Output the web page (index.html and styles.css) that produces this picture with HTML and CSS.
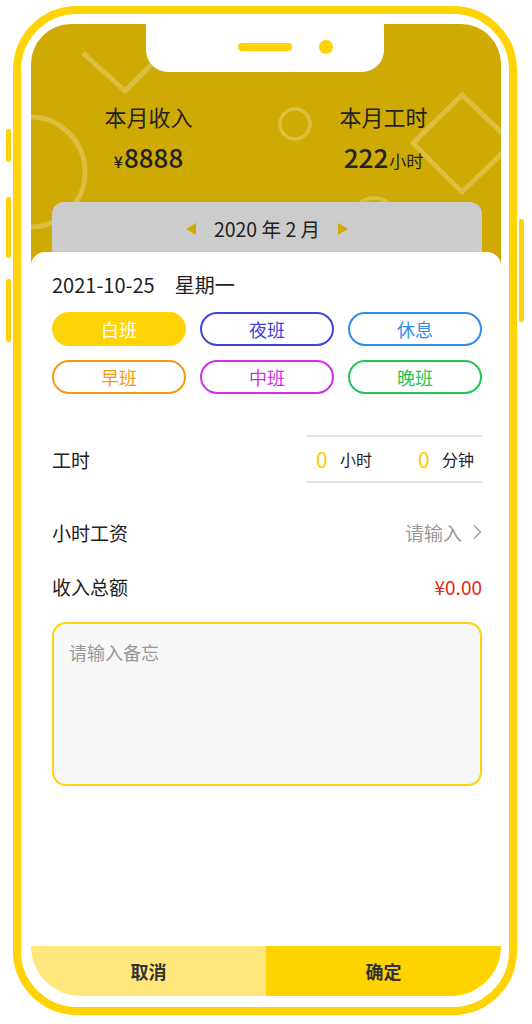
FILE: index.html
```html
<!DOCTYPE html>
<html lang="zh-CN">
<head>
<meta charset="utf-8">
<title>记工时</title>
<link rel="stylesheet" href="styles.css">
</head>
<body>
<div class="device">
  <span class="side-btn side-l1"></span>
  <span class="side-btn side-l2"></span>
  <span class="side-btn side-l3"></span>
  <span class="side-btn side-r1"></span>
  <div class="notch"><span class="speaker"></span><span class="camera"></span></div>
  <div class="screen">
    <header class="hero">
      <svg class="hero-art" width="470" height="242" viewBox="0 0 470 242" aria-hidden="true">
        <g fill="none" stroke="rgba(255,255,255,0.25)" stroke-linejoin="round" stroke-linecap="butt">
          <polyline points="52,29 94,67 140,21" stroke-width="5"/>
          <circle cx="-1" cy="148" r="55" stroke-width="5"/>
          <circle cx="264" cy="100" r="15" stroke-width="3.5"/>
          <polygon points="431,71 382,119 431,168 482,119" stroke-width="5"/>
          <circle cx="343" cy="196" r="22" stroke-width="4"/>
        </g>
      </svg>
      <div class="stats">
        <div class="stat">
          <div class="stat-title">本月收入</div>
          <div class="stat-value"><span class="yen">¥</span>8888</div>
        </div>
        <div class="stat">
          <div class="stat-title">本月工时</div>
          <div class="stat-value">222<span class="unit">小时</span></div>
        </div>
      </div>
      <div class="month-bar">
        <span class="tri tri-left"></span>
        <span class="month">2020 年 2 月</span>
        <span class="tri tri-right"></span>
      </div>
    </header>
    <main class="sheet">
      <div class="day">2021-10-25<span class="weekday">星期一</span></div>
      <div class="shifts">
        <span class="shift shift-day">白班</span>
        <span class="shift shift-night">夜班</span>
        <span class="shift shift-rest">休息</span>
        <span class="shift shift-early">早班</span>
        <span class="shift shift-mid">中班</span>
        <span class="shift shift-late">晚班</span>
      </div>
      <div class="row row-hours">
        <span class="label">工时</span>
        <div class="hours-box">
          <span class="hours-group"><span class="num">0</span><span class="hunit">小时</span></span>
          <span class="hours-group"><span class="num">0</span><span class="hunit">分钟</span></span>
        </div>
      </div>
      <div class="row">
        <span class="label">小时工资</span>
        <span class="placeholder">请输入<svg class="chev" width="10" height="16" viewBox="0 0 10 16"><polyline points="2,1.5 8.5,8 2,14.5" fill="none" stroke="#999" stroke-width="1.4"/></svg></span>
      </div>
      <div class="row">
        <span class="label">收入总额</span>
        <span class="total">¥0.00</span>
      </div>
      <textarea class="memo" placeholder="请输入备忘"></textarea>
    </main>
    <footer class="actions">
      <button class="btn btn-cancel" type="button">取消</button>
      <button class="btn btn-ok" type="button">确定</button>
    </footer>
  </div>
</div>
</body>
</html>
```

FILE: styles.css
```css
* { box-sizing: border-box; }

html, body {
  margin: 0;
  padding: 0;
  background: #ffffff;
}

body {
  font-family: "Noto Sans CJK SC", "Noto Sans", sans-serif;
  color: #222;
}

.device {
  position: relative;
  margin: 6px 0 0 13px;
  width: 504px;
  height: 1009px;
  border: 8px solid #FFD306;
  border-radius: 64px;
  padding: 10px 8px 11px 10px;
  background: #fff;
}

.side-btn {
  position: absolute;
  width: 5px;
  background: #FFD306;
  border-radius: 2px;
}
.side-l1 { left: -15px; top: 115px; height: 33px; }
.side-l2 { left: -15px; top: 183px; height: 61px; }
.side-l3 { left: -15px; top: 265px; height: 63px; }
.side-r1 { right: -15px; top: 205px; height: 103px; }

.notch {
  position: absolute;
  left: 125px;
  top: 0;
  width: 238px;
  height: 58px;
  background: #fff;
  border-radius: 0 0 22px 22px;
  z-index: 5;
}
.speaker {
  position: absolute;
  left: 92px;
  top: 29px;
  width: 54px;
  height: 8px;
  border-radius: 4px;
  background: #FFD306;
}
.camera {
  position: absolute;
  left: 173px;
  top: 26px;
  width: 14px;
  height: 14px;
  border-radius: 50%;
  background: #FFD306;
}

.screen {
  width: 470px;
  height: 972px;
  border-radius: 40px 40px 50px 50px;
  overflow: hidden;
  background: #fff;
  display: flex;
  flex-direction: column;
}

/* header */
.hero {
  position: relative;
  height: 242px;
  flex: none;
  background: #CFAA02;
  overflow: hidden;
  padding-top: 77px;
}
.hero-art {
  position: absolute;
  left: 0;
  top: 0;
}
.stats {
  position: relative;
  display: grid;
  grid-template-columns: 1fr 1fr;
  text-align: center;
}
.stat-title {
  font-size: 22px;
  line-height: 30px;
  color: #222;
}
.stat-value {
  margin-top: 9px;
  font-size: 26px;
  line-height: 34px;
  font-weight: 500;
  color: #222;
}
.yen {
  font-size: 16px;
  margin-right: 1px;
}
.unit {
  font-size: 17px;
  font-weight: 400;
  margin-left: 1px;
}

.month-bar {
  position: relative;
  margin: 24px 19px 0 21px;
  height: 80px;
  background: #CCCCCC;
  border-radius: 12px;
  display: flex;
  justify-content: center;
  align-items: flex-start;
  padding-top: 13px;
  gap: 18px;
}
.month {
  font-size: 19.5px;
  line-height: 28px;
  color: #222;
}
.tri {
  width: 0;
  height: 0;
  margin-top: 8px;
  border-top: 6px solid transparent;
  border-bottom: 6px solid transparent;
}
.tri-left { border-right: 10px solid #CFAA02; }
.tri-right { border-left: 10px solid #CFAA02; }

/* sheet */
.sheet {
  position: relative;
  flex: 1;
  margin-top: -14px;
  background: #fff;
  border-radius: 14px 14px 0 0;
  padding: 20px 19px 0 21px;
  display: flex;
  flex-direction: column;
}
.day {
  font-size: 20px;
  line-height: 26px;
  color: #222;
}
.weekday {
  margin-left: 20px;
}

.shifts {
  margin-top: 14px;
  display: grid;
  grid-template-columns: repeat(3, 1fr);
  column-gap: 14px;
  row-gap: 14px;
}
.shift {
  height: 34px;
  border: 2px solid currentColor;
  border-radius: 17px;
  display: flex;
  align-items: center;
  justify-content: center;
  font-size: 18px;
}
.shift-day { background: #FFD306; border-color: #FFD306; color: #fff; }
.shift-night { color: #3F44DA; }
.shift-rest { color: #2E8CEB; }
.shift-early { color: #F39A12; }
.shift-mid { color: #D42FE6; }
.shift-late { color: #1FC84E; }

.row {
  height: 54px;
  display: flex;
  align-items: center;
  justify-content: space-between;
}
.row-hours {
  height: 48px;
  margin-top: 41px;
  margin-bottom: 22px;
}
.label {
  font-size: 19px;
  color: #222;
}
.hours-box {
  width: 176px;
  height: 48px;
  border-top: 2px solid #E3E3E3;
  border-bottom: 2px solid #E3E3E3;
  display: flex;
  align-items: center;
  padding-left: 10px;
  gap: 46px;
}
.hours-group {
  display: flex;
  align-items: center;
  gap: 13px;
}
.num {
  font-size: 21px;
  color: #FFC800;
  width: 11px;
}
.hunit {
  font-size: 16px;
  color: #222;
}

.placeholder {
  font-size: 19px;
  color: #999;
  display: flex;
  align-items: center;
  gap: 10px;
}
.chev { display: block; }
.total {
  font-size: 19px;
  color: #E8280F;
}

.memo {
  margin-top: 9px;
  height: 164px;
  width: 100%;
  resize: none;
  border: 2px solid #FFD306;
  border-radius: 14px;
  background: #F7F7F7;
  padding: 15px 15px;
  font-family: "Noto Sans CJK SC", "Noto Sans", sans-serif;
  font-size: 18px;
  line-height: 26px;
  color: #222;
  outline: none;
}
.memo::placeholder { color: #999; }

/* actions */
.actions {
  flex: none;
  height: 50px;
  display: flex;
}
.btn {
  flex: 1;
  border: 0;
  margin: 0;
  padding: 0;
  font-family: "Noto Sans CJK SC", "Noto Sans", sans-serif;
  font-size: 18px;
  font-weight: 700;
  color: #333;
}
.btn-cancel { background: #FFE77B; }
.btn-ok { background: #FFD300; }
```
